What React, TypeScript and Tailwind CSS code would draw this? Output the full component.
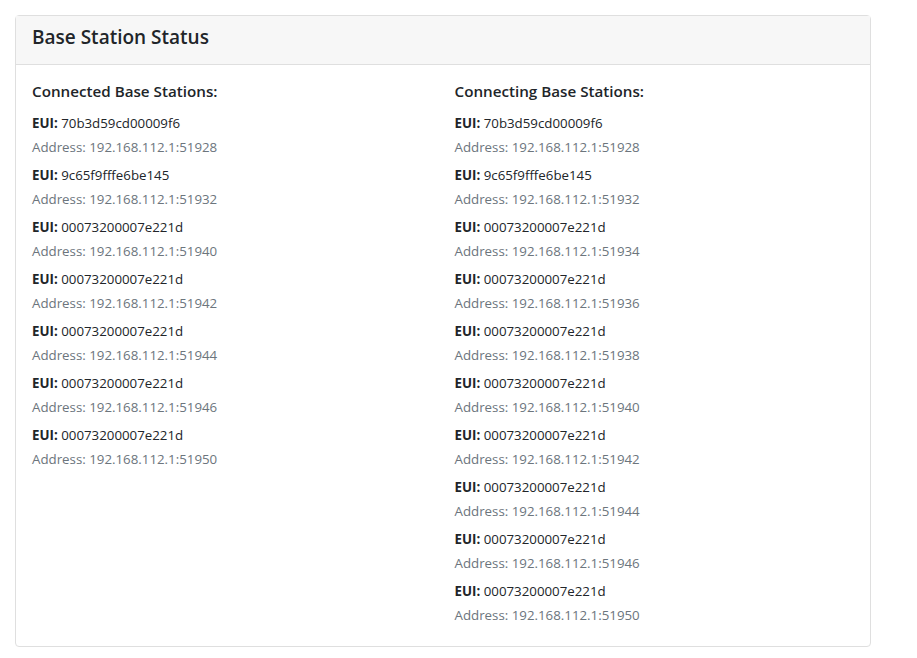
const CONNECTED = [
  { eui: "70b3d59cd00009f6", address: "192.168.112.1:51928" },
  { eui: "9c65f9fffe6be145", address: "192.168.112.1:51932" },
  { eui: "00073200007e221d", address: "192.168.112.1:51940" },
  { eui: "00073200007e221d", address: "192.168.112.1:51942" },
  { eui: "00073200007e221d", address: "192.168.112.1:51944" },
  { eui: "00073200007e221d", address: "192.168.112.1:51946" },
  { eui: "00073200007e221d", address: "192.168.112.1:51950" },
];

const CONNECTING = [
  { eui: "70b3d59cd00009f6", address: "192.168.112.1:51928" },
  { eui: "9c65f9fffe6be145", address: "192.168.112.1:51932" },
  { eui: "00073200007e221d", address: "192.168.112.1:51934" },
  { eui: "00073200007e221d", address: "192.168.112.1:51936" },
  { eui: "00073200007e221d", address: "192.168.112.1:51938" },
  { eui: "00073200007e221d", address: "192.168.112.1:51940" },
  { eui: "00073200007e221d", address: "192.168.112.1:51942" },
  { eui: "00073200007e221d", address: "192.168.112.1:51944" },
  { eui: "00073200007e221d", address: "192.168.112.1:51946" },
  { eui: "00073200007e221d", address: "192.168.112.1:51950" },
];

type Station = { eui: string; address: string };

function StationList({ title, items }: { title: string; items: Station[] }) {
  return (
    <div>
      <h5 className="mb-[11px] text-[15.2px] font-semibold leading-[1.2] text-[#212529]">{title}</h5>
      <ul>
        {items.map((s, i) => (
          <li key={i} className="mb-1 text-[13.3px] leading-6">
            <div className="text-[#212529]">
              <span className="font-bold">EUI:</span> {s.eui}
            </div>
            <div className="text-[#6c757d]">Address: {s.address}</div>
          </li>
        ))}
      </ul>
    </div>
  );
}

export default function App() {
  return (
    <div className="min-h-screen bg-white p-[15px] pr-[46px] font-['Open_Sans',sans-serif]">
      <div className="rounded border border-[#dfdfdf]">
        <div className="flex h-[49px] items-center border-b border-[#dfdfdf] bg-[#f7f7f7] px-4 pb-[6px]">
          <h4 className="text-[19px] font-semibold text-[#212529]">Base Station Status</h4>
        </div>
        <div className="grid grid-cols-2 gap-x-[23px] px-4 pt-[17px] pb-[15px]">
          <StationList title="Connected Base Stations:" items={CONNECTED} />
          <StationList title="Connecting Base Stations:" items={CONNECTING} />
        </div>
      </div>
    </div>
  );
}
